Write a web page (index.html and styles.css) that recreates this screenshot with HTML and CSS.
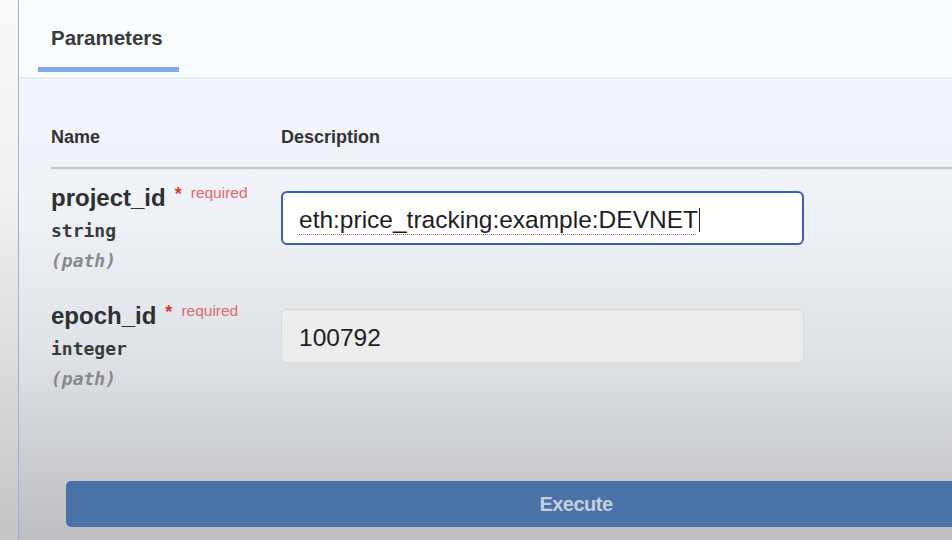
FILE: index.html
```html
<!DOCTYPE html>
<html>
<head>
<meta charset="utf-8">
<link rel="stylesheet" href="styles.css">
</head>
<body>
<div class="gutter"></div>
<div class="panel">
  <div class="tabs">
    <div class="tab">Parameters</div>
  </div>
  <div class="body">
    <div class="table-head">
      <div class="col-name">Name</div>
      <div class="col-desc">Description</div>
    </div>
    <div class="param">
      <div class="param-name">
        <div class="pname">project_id<span class="star">*</span><span class="req">required</span></div>
        <div class="ptype">string</div>
        <div class="pin">(path)</div>
      </div>
      <div class="field focused"><span class="spell">eth:price_tracking:example:DEVNET</span><span class="caret"></span></div>
    </div>
    <div class="param">
      <div class="param-name">
        <div class="pname">epoch_id<span class="star">*</span><span class="req">required</span></div>
        <div class="ptype">integer</div>
        <div class="pin">(path)</div>
      </div>
      <div class="field filled">100792</div>
    </div>
    <div class="actions">
      <button class="execute">Execute</button>
    </div>
  </div>
</div>
</body>
</html>
```
FILE: styles.css
```css
html, body {
  margin: 0;
  height: 540px;
  overflow: hidden;
}
body {
  display: flex;
  font-family: "Liberation Sans", Arial, sans-serif;
  color: #3b3b3b;
}
.gutter {
  width: 18px;
  flex: none;
  background: linear-gradient(180deg, #f7f9fa 0%, #f1f2f3 35%, #d9dadb 70%, #c4c5c7 100%);
}
.panel {
  flex: 1;
  min-width: 0;
  border-left: 1px solid #9eb0d4;
  display: flex;
  flex-direction: column;
  overflow: hidden;
}
.tabs {
  height: 79px;
  flex: none;
  background: #f8fcfe;
  border-bottom: 2px solid #e7ebee;
  display: flex;
  align-items: flex-end;
  padding-left: 19px;
  box-sizing: border-box;
}
.tab {
  width: 141px;
  box-sizing: border-box;
  padding: 0 0 17px 13px;
  font-size: 20.5px;
  font-weight: 700;
  color: #3a3a3a;
  border-bottom: 5px solid #7eaaea;
  margin-bottom: 5px;
}
.body {
  flex: 1;
  background: linear-gradient(180deg, #f3f6fc 0%, #eef1f6 30%, #dfe2e7 60%, #c9cbcf 85%, #bebfc3 100%);
  padding-left: 32px;
}
.table-head {
  display: flex;
  margin-top: 48px;
  padding-bottom: 19px;
  border-bottom: 2px solid #c3c7cb;
  font-size: 18px;
  font-weight: 700;
  color: #333;
}
.col-name {
  width: 230px;
}
.param {
  display: flex;
  align-items: flex-start;
  margin-top: 22px;
}
.param + .param {
  margin-top: 37px;
}
.param-name {
  width: 230px;
  flex: none;
}
.pname {
  font-size: 24px;
  font-weight: 700;
  color: #2f2f2f;
  line-height: 26px;
  margin-top: -6px;
}
.star {
  color: #d9383a;
  font-size: 18px;
  position: relative;
  top: -6px;
  margin-left: 9px;
}
.req {
  color: #e06a6d;
  font-size: 15.5px;
  font-weight: 400;
  position: relative;
  top: -8px;
  margin-left: 9px;
}
.ptype {
  font-family: "DejaVu Sans Mono", monospace;
  font-weight: 700;
  font-size: 18px;
  color: #3a3a3a;
  margin-top: 6px;
  line-height: 22px;
}
.pin {
  font-family: "DejaVu Sans Mono", monospace;
  font-style: italic;
  font-weight: 700;
  font-size: 18px;
  color: #8a8a8a;
  margin-top: 8px;
  line-height: 22px;
}
.field {
  width: 523px;
  height: 54px;
  box-sizing: border-box;
  border-radius: 6px;
  font-size: 24.5px;
  color: #1e1e1e;
  padding: 3px 0 0 16px;
  display: flex;
  align-items: center;
}
.focused {
  background: #ffffff;
  border: 2px solid #3b5eae;
}
.filled {
  background: #ededee;
  border: 1px solid #d8d9db;
  padding-left: 17px;
}
.spell {
  text-decoration: underline dotted #d06060;
  text-underline-offset: 6px;
  text-decoration-thickness: 1px;
}
.caret {
  display: inline-block;
  width: 1px;
  height: 24px;
  background: #222;
  margin-left: 1px;
}
.actions {
  margin-top: 91px;
  padding-left: 15px;
}
.execute {
  display: block;
  width: 1020px;
  height: 46px;
  border: none;
  border-radius: 5px;
  background: #4b72a8;
  color: #c6d0dd;
  font-family: "Liberation Sans", Arial, sans-serif;
  font-weight: 700;
  font-size: 20px;
  letter-spacing: -0.5px;
  padding: 0;
}
```
